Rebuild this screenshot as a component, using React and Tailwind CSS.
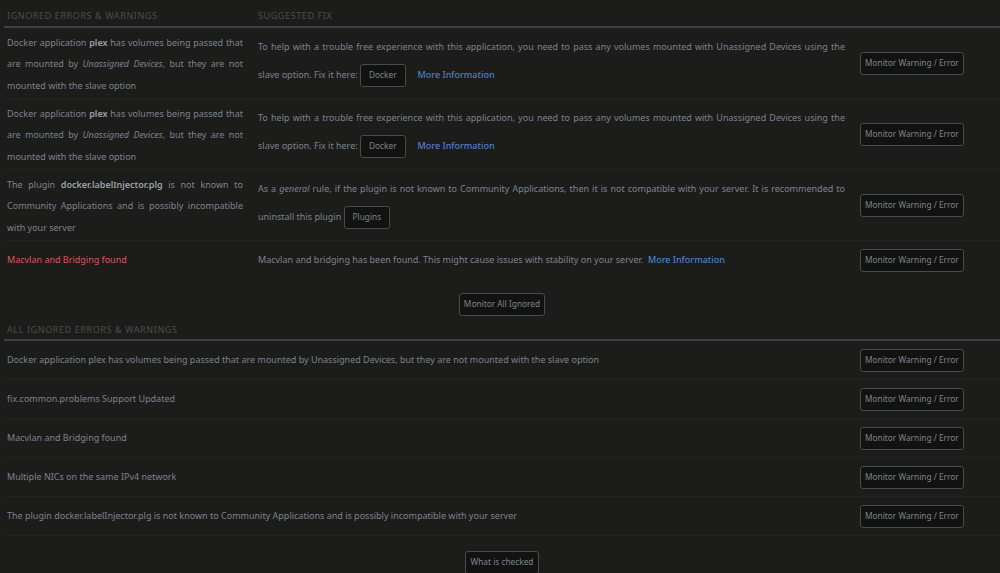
import React from 'react';

const font = { fontFamily: '"Noto Sans", "Open Sans", sans-serif' };

const Btn = ({ children, className = '' }) => (
  <button
    className={`h-[23px] px-[4px] rounded-[3px] border border-[#454b52] bg-[#121311] text-[#7d848d] text-[8.3px] leading-none whitespace-nowrap align-middle ${className}`}
  >
    {children}
  </button>
);

const Link = ({ children }) => <span className="text-[#4f7fc9] font-medium">{children}</span>;

const ignored = [
  {
    left: (
      <>
        Docker application <b className="text-[#9aa0a8] font-semibold">plex</b> has volumes being passed that are mounted by{' '}
        <i>Unassigned Devices</i>, but they are not mounted with the slave option
      </>
    ),
    fix: (
      <>
        To help with a trouble free experience with this application, you need to pass any volumes mounted with Unassigned
        Devices using the slave option. Fix it here: <Btn className="px-[8px]">Docker</Btn>
        <span className="ml-[12px]">
          <Link>More Information</Link>
        </span>
      </>
    ),
  },
  {
    left: (
      <>
        Docker application <b className="text-[#9aa0a8] font-semibold">plex</b> has volumes being passed that are mounted by{' '}
        <i>Unassigned Devices</i>, but they are not mounted with the slave option
      </>
    ),
    fix: (
      <>
        To help with a trouble free experience with this application, you need to pass any volumes mounted with Unassigned
        Devices using the slave option. Fix it here: <Btn className="px-[8px]">Docker</Btn>
        <span className="ml-[12px]">
          <Link>More Information</Link>
        </span>
      </>
    ),
  },
  {
    left: (
      <>
        The plugin <b className="text-[#9aa0a8] font-semibold">docker.labelInjector.plg</b> is not known to Community
        Applications and is possibly incompatible with your server
      </>
    ),
    fix: (
      <>
        As a <i>general</i> rule, if the plugin is not known to Community Applications, then it is not compatible with your
        server. It is recommended to uninstall this plugin <Btn className="px-[8px]">Plugins</Btn>
      </>
    ),
  },
];

const allIgnored = [
  'Docker application plex has volumes being passed that are mounted by Unassigned Devices, but they are not mounted with the slave option',
  'fix.common.problems Support Updated',
  'Macvlan and Bridging found',
  'Multiple NICs on the same IPv4 network',
  'The plugin docker.labelInjector.plg is not known to Community Applications and is possibly incompatible with your server',
];

export default function App() {
  return (
    <div className="w-[1000px] h-[573px] overflow-hidden bg-[#1c1d1b] text-[#7b828b] text-[9px]" style={font}>
      <div className="pl-1">
        {/* header */}
        <div className="flex items-end h-[28px] pb-[4px] border-b-2 border-[#394048] text-[#4a4d4f] tracking-[0.6px]">
          <div className="w-[254px] pl-[3px]">IGNORED ERRORS &amp; WARNINGS</div>
          <div>SUGGESTED FIX</div>
        </div>

        {ignored.map((row, i) => (
          <div key={i} className="flex items-center h-[71px] border-b border-[#222321]">
            <div className="w-[239px] pl-[3px] pt-[2px] leading-[21.5px] text-justify">{row.left}</div>
            <div className="w-[587px] ml-[15px] pb-[4px] leading-[28px] text-justify">{row.fix}</div>
            <div className="ml-[15px]">
              <Btn>Monitor Warning / Error</Btn>
            </div>
          </div>
        ))}

        <div className="flex items-center h-[37px] pt-[1px]">
          <div className="w-[239px] pl-[3px] text-[#dc5656]">Macvlan and Bridging found</div>
          <div className="w-[587px] ml-[15px]">
            Macvlan and bridging has been found. This might cause issues with stability on your server.&nbsp;&nbsp;
            <Link>More Information</Link>
          </div>
          <div className="ml-[15px]">
            <Btn>Monitor Warning / Error</Btn>
          </div>
        </div>

        <div className="flex justify-center pt-[15px] pb-[3px]">
          <Btn>Monitor All Ignored</Btn>
        </div>

        <div className="flex items-end h-[22px] pb-[3px] border-b-2 border-[#394048] text-[#4a4d4f] tracking-[0.6px]">
          <div className="pl-[3px]">ALL IGNORED ERRORS &amp; WARNINGS</div>
        </div>

        {allIgnored.map((t, i) => (
          <div key={i} className="flex items-center h-[39px] border-b border-[#222321] last:border-b-0">
            <div className="w-[841px] pl-[3px]">{t}</div>
            <div className="ml-[15px]">
              <Btn>Monitor Warning / Error</Btn>
            </div>
          </div>
        ))}

        <div className="flex justify-center pt-[15px]">
          <Btn className="px-[5px]">What is checked</Btn>
        </div>
      </div>
    </div>
  );
}
